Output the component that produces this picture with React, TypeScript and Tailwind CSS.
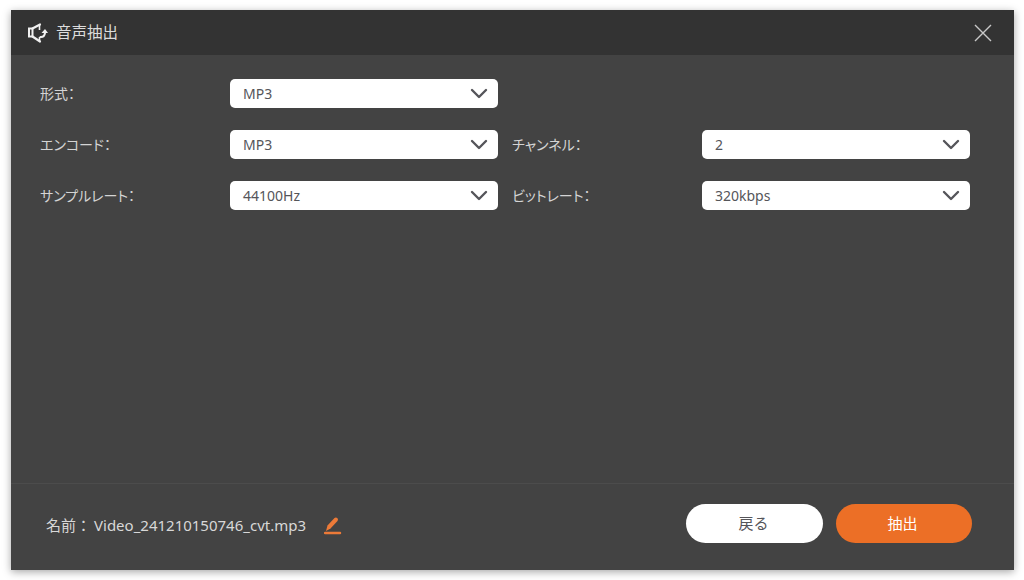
const FONT = "font-['Noto_Sans','Noto_Sans_CJK_JP',sans-serif]";

const SpeakerIcon = () => (
  <svg width="22" height="22" viewBox="0 0 22 22" fill="none" className="text-[#f0f0f0]">
    <path d="M2 6.5h3.5v8H2z" stroke="currentColor" strokeWidth="2" />
    <path d="M5.5 6.5 13 2.5" stroke="currentColor" strokeWidth="2.2" strokeLinecap="round" />
    <path d="M5.5 14.5 13 19.5" stroke="currentColor" strokeWidth="2.2" strokeLinecap="round" />
    <path d="M12.5 3v5M12.5 15v4" stroke="currentColor" strokeWidth="1.6" />
    <path d="M13.5 15c2.4.2 4-1 4.5-4" stroke="currentColor" strokeWidth="2" strokeLinecap="round" />
    <path d="M14.5 11h6.5l-3-4z" fill="currentColor" />
  </svg>
);

const Chevron = () => (
  <svg width="18" height="11" viewBox="0 0 18 11" fill="none" className="text-[#55555a]">
    <path d="M2 2l7 7 7-7" stroke="currentColor" strokeWidth="2.4" strokeLinecap="round" strokeLinejoin="round" />
  </svg>
);

const Select = ({ value }: { value: string }) => (
  <div className="flex h-[29px] w-[268px] shrink-0 items-center justify-between rounded-[5px] bg-white pl-[13px] pr-[10px] text-[14px] text-[#55555a]">
    <span>{value}</span>
    <Chevron />
  </div>
);

const Label = ({ text }: { text: string }) => (
  <div className="w-[190px] shrink-0 text-[14px] text-[#d4d4d4] [font-feature-settings:'palt']">{text}</div>
);

export default function App() {
  return (
    <div className={`h-[580px] w-[1024px] overflow-hidden bg-white pl-[11px] pt-[10px] ${FONT}`}>
      <div className="flex h-[560px] w-[1003px] flex-col bg-[#434343] shadow-[0_2px_8px_rgba(0,0,0,0.35)]">
        <header className="flex h-[45px] shrink-0 items-center justify-between bg-[#333333] pl-[16px] pr-[21px]">
          <div className="flex items-center gap-[7px]">
            <SpeakerIcon />
            <span className="text-[15.5px] text-[#dcdcdc]">音声抽出</span>
          </div>
          <svg width="20" height="20" viewBox="0 0 20 20" fill="none" className="text-[#c8c8c8]">
            <path d="M2 2l16 16M18 2 2 18" stroke="currentColor" strokeWidth="1.4" />
          </svg>
        </header>

        <main className="flex flex-1 flex-col pl-[29px] pt-[24px]">
          <div className="flex items-center">
            <Label text="形式：" />
            <Select value="MP3" />
          </div>
          <div className="mt-[22px] flex items-center">
            <Label text="エンコード：" />
            <Select value="MP3" />
            <div className="w-[14px] shrink-0" />
            <Label text="チャンネル：" />
            <Select value="2" />
          </div>
          <div className="mt-[22px] flex items-center">
            <Label text="サンプルレート：" />
            <Select value="44100Hz" />
            <div className="w-[14px] shrink-0" />
            <Label text="ビットレート：" />
            <Select value="320kbps" />
          </div>
        </main>

        <footer className="flex h-[87px] shrink-0 items-center justify-between border-t border-[#4c4c4c] pb-[8px] pl-[35px] pr-[42px]">
          <div className="flex items-center pt-[4px]">
            <span className="text-[15px] text-[#d8d8d8]">名前：</span>
            <span className="ml-[3px] text-[15px] text-[#d8d8d8]">Video_241210150746_cvt.mp3</span>
            <svg width="18" height="19" viewBox="0 0 18 19" fill="none" className="ml-[18px] text-[#ec7a38]">
              <path d="M2 15 3.5 9.5 10.5 2Q12 1 13.5 2.3 14.5 3.5 13.5 5L6.5 12.5Z" fill="currentColor" />
              <path d="M1 17h15" stroke="currentColor" strokeWidth="2.5" strokeLinecap="round" />
            </svg>
          </div>
          <div className="flex items-center gap-[13px]">
            <button type="button" className="h-[39px] w-[137px] rounded-full bg-white pr-[2px] text-[15px] text-[#55555a]">
              戻る
            </button>
            <button type="button" className="h-[39px] w-[136px] rounded-full bg-[#ec6f26] pr-[3px] text-[15px] text-white">
              抽出
            </button>
          </div>
        </footer>
      </div>
    </div>
  );
}
